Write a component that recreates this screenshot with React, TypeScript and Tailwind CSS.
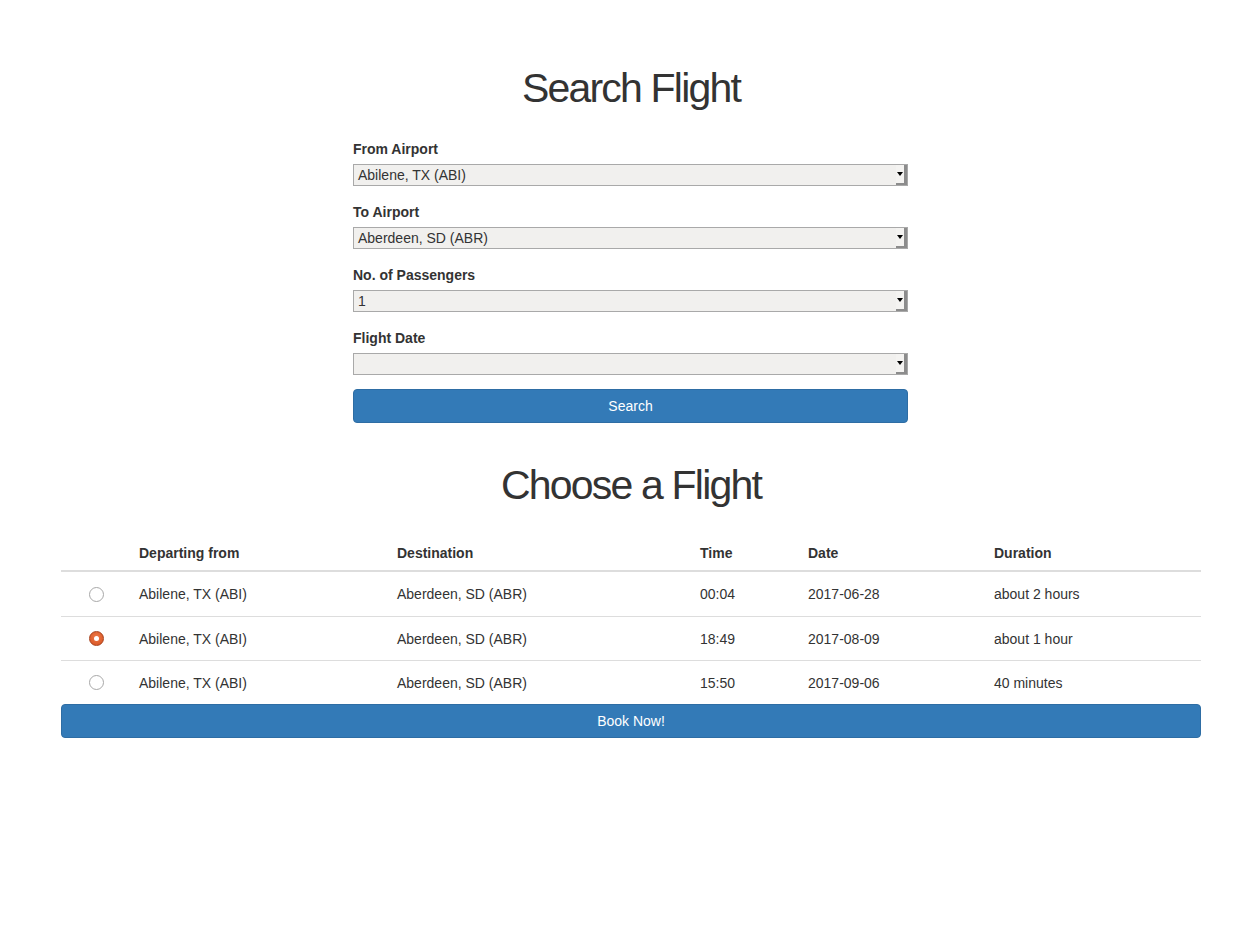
const font = { fontFamily: '"Liberation Sans", Arial, sans-serif' };

const fields = [
  { label: "From Airport", value: "Abilene, TX (ABI)" },
  { label: "To Airport", value: "Aberdeen, SD (ABR)" },
  { label: "No. of Passengers", value: "1" },
  { label: "Flight Date", value: "" },
];

const flights = [
  { time: "00:04", date: "2017-06-28", duration: "about 2 hours", checked: false },
  { time: "18:49", date: "2017-08-09", duration: "about 1 hour", checked: true },
  { time: "15:50", date: "2017-09-06", duration: "40 minutes", checked: false },
];

const cols = "grid grid-cols-[70px_258px_303px_108px_186px_1fr]";

function FakeSelect({ value }: { value: string }) {
  return (
    <div className="flex h-[22px] w-full items-stretch border border-[#a9a9a9] bg-[#f1f0ee] text-[14px] leading-[20px] text-[#333]">
      <div className="flex-1 truncate pl-[4px]">{value}</div>
      <div className="flex w-[11px] items-center justify-center border-r-[3px] border-b-[2px] border-r-[#8c8c8c] border-b-[#8c8c8c] bg-[#f4f3f1]">
        <div className="h-0 w-0 border-x-[3px] border-t-[4px] border-x-transparent border-t-black" />
      </div>
    </div>
  );
}

function Radio({ checked }: { checked: boolean }) {
  if (checked) {
    return (
      <div className="flex h-[15px] w-[15px] items-center justify-center rounded-full border border-[#a8401a] bg-[radial-gradient(circle_at_50%_40%,#ee7a48,#d4501f)]">
        <div className="h-[5px] w-[5px] rounded-full bg-white" />
      </div>
    );
  }
  return <div className="h-[15px] w-[15px] rounded-full border border-[#a8a8a8] bg-white" />;
}

export default function App() {
  return (
    <div style={font} className="min-h-[939px] bg-white text-[#333]">
      <div className="ml-[61px] w-[1140px] pt-[66px]">
        <h1 className="text-center text-[41px] leading-[45px] tracking-[-1.8px]">Search Flight</h1>
        <div className="ml-[292px] mt-[28px] w-[555px]">
          {fields.map((f, i) => (
            <div key={f.label} className={i === fields.length - 1 ? "mb-[14px]" : "mb-[16px]"}>
              <div className="mb-[5px] text-[14px] font-bold leading-[20px]">{f.label}</div>
              <FakeSelect value={f.value} />
            </div>
          ))}
          <button className="h-[34px] w-full rounded-[4px] border border-[#2e6da4] bg-[#337ab7] text-[14px] text-white">
            Search
          </button>
        </div>
        <h1 className="mt-[40px] text-center text-[41px] leading-[45px] tracking-[-1.8px]">Choose a Flight</h1>
        <div className="mt-[27px] text-[14px] leading-[20px]">
          <div className={`${cols} h-[37px] items-center border-b-2 border-[#ddd] font-bold`}>
            <div />
            <div className="px-[8px]">Departing from</div>
            <div className="px-[8px]">Destination</div>
            <div className="px-[8px]">Time</div>
            <div className="px-[8px]">Date</div>
            <div className="px-[8px]">Duration</div>
          </div>
          {flights.map((r, i) => (
            <div
              key={r.time}
              className={`${cols} h-[44px] items-center ${i > 0 ? "border-t border-[#ddd]" : ""}`}
            >
              <div className="flex justify-center">
                <Radio checked={r.checked} />
              </div>
              <div className="px-[8px]">Abilene, TX (ABI)</div>
              <div className="px-[8px]">Aberdeen, SD (ABR)</div>
              <div className="px-[8px]">{r.time}</div>
              <div className="px-[8px]">{r.date}</div>
              <div className="px-[8px]">{r.duration}</div>
            </div>
          ))}
          <button className="h-[34px] w-full rounded-[4px] border border-[#2e6da4] bg-[#337ab7] text-[14px] text-white">
            Book Now!
          </button>
        </div>
      </div>
    </div>
  );
}
